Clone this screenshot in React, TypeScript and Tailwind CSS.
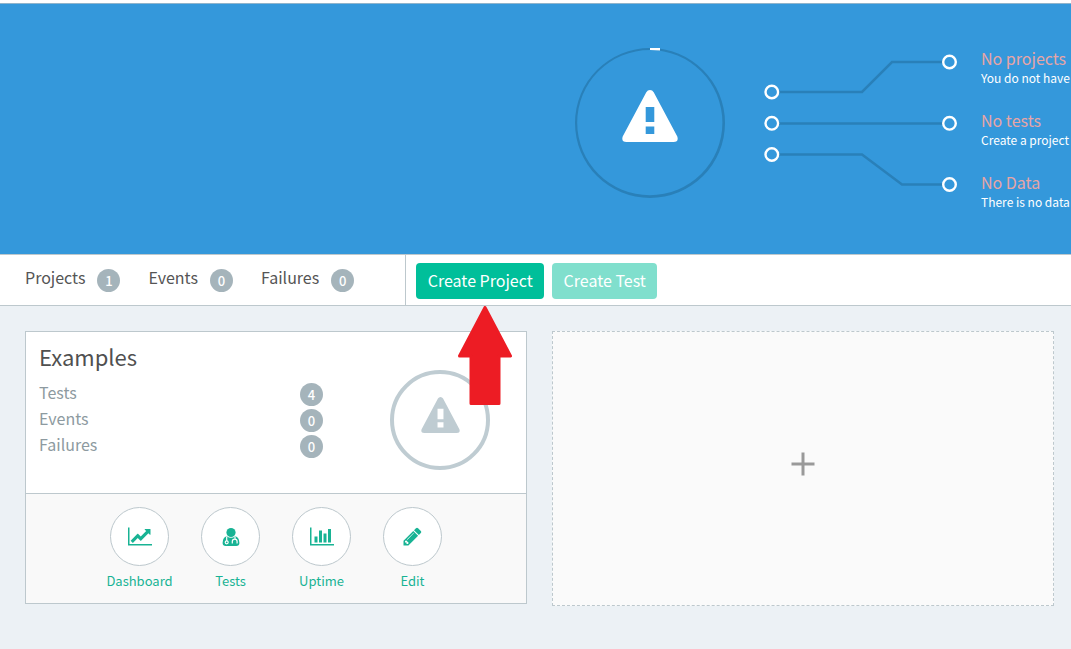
import React from "react";

const notices = [
  { title: "No projects", text: "You do not have" },
  { title: "No tests", text: "Create a project" },
  { title: "No Data", text: "There is no data" },
];

const totals = [
  { label: "Projects", count: 1 },
  { label: "Events", count: 0 },
  { label: "Failures", count: 0 },
];

const exampleStats = [
  { label: "Tests", count: 4 },
  { label: "Events", count: 0 },
  { label: "Failures", count: 0 },
];

const WarningIcon: React.FC<{ className: string }> = ({ className }) => (
  <svg viewBox="0 0 56 52" className={className} fill="currentColor" aria-hidden="true">
    <path
      fillRule="evenodd"
      d="M24.300 2.200Q25.600 0 28 0T31.700 2.200L55.300 46.500Q57 52 51.500 52H4.500Q-1 52 .7 46.500ZM23.700 17V32H32.300V17ZM23.700 36.500V44H32.300V36.500Z"
    />
  </svg>
);

const LineChartIcon = () => (
  <svg viewBox="0 0 2048 1792" className="h-[21px] w-6" fill="currentColor" aria-hidden="true">
    <path d="M2048 1536v128h-2048v-1536h128v1408h1920zm-128-1248v435q0 21-19.500 29.500t-35.500-7.500l-121-121-633 633q-10 10-23 10t-23-10l-233-233-416 416-192-192 585-585q10-10 23-10t23 10l233 233 464-464-121-121q-16-16-7.500-35.500t29.500-19.500h435q14 0 23 9t9 23z" />
  </svg>
);

const BarChartIcon = () => (
  <svg viewBox="0 0 2048 1792" className="h-[21px] w-6" fill="currentColor" aria-hidden="true">
    <path d="M640 896v512h-256v-512h256zm384-512v1024h-256v-1024h256zm1024 1152v128h-2048v-1536h128v1408h1920zm-640-896v768h-256v-768h256zm384-384v1152h-256v-1152h256z" />
  </svg>
);

const PencilIcon = () => (
  <svg viewBox="0 0 1792 1792" className="size-[21px]" fill="currentColor" aria-hidden="true">
    <path d="M491 1536l91-91-235-235-91 91v107h128v128h107zm523-928q0-22-22-22-10 0-17 7l-542 542q-7 7-7 17 0 22 22 22 10 0 17-7l542-542q7-7 7-17zm-54-192l416 416-832 832h-416v-416zm683 96q0 53-37 90l-166 166-416-416 166-165q36-38 90-38 53 0 91 38l235 234q37 39 37 91z" />
  </svg>
);

const DoctorIcon = () => (
  <svg viewBox="0 0 18 20" className="h-5 w-[18px]" aria-hidden="true">
    <path
      fill="currentColor"
      d="M4.800 9.200Q9 12.300 13.200 9.200Q17.400 10.200 17.400 16Q17.400 19 14.200 19H3.800Q.6 19 .6 16Q.6 10.200 4.800 9.200Z"
    />
    <circle cx="9" cy="5.500" r="4.600" fill="currentColor" />
    <path
      d="M4.700 9.500V14M13 9.500V12M10.300 16.500V14.500Q10.300 12.200 12.700 12.200T15.100 14.500V16.500"
      fill="none"
      stroke="white"
      strokeWidth="1.200"
    />
    <circle cx="4.700" cy="15.300" r="1.500" fill="currentColor" stroke="white" strokeWidth="1.200" />
  </svg>
);

const actions = [
  { label: "Dashboard", icon: <LineChartIcon /> },
  { label: "Tests", icon: <DoctorIcon /> },
  { label: "Uptime", icon: <BarChartIcon /> },
  { label: "Edit", icon: <PencilIcon /> },
];

const Badge: React.FC<{ count: number }> = ({ count }) => (
  <span className="flex size-[23px] shrink-0 items-center justify-center rounded-full bg-[#a5b4bb] text-[13px] leading-none font-medium text-white">
    {count}
  </span>
);

const StatusHeader = () => (
  <header className="mt-[3px] flex h-[251px] items-start justify-end overflow-hidden border-t border-[#8fb4cc] bg-[#3498db] pt-[43px]">
    <div className="relative mt-px flex size-[150px] shrink-0 items-center justify-center">
      <svg viewBox="0 0 150 150" className="absolute inset-0" aria-hidden="true">
        <path
          fill="#2980b9"
          fillRule="evenodd"
          d="M75 0A75 75 0 1 1 75 150A75 75 0 1 1 75 0ZM74.800 2A72.600 72.600 0 1 0 74.800 147.200A72.600 72.600 0 1 0 74.800 2Z"
        />
        <path d="M75 0H85V2.600L75 2Z" fill="white" />
      </svg>
      <WarningIcon className="mb-[14px] h-[52px] w-14 text-white" />
    </div>
    <svg viewBox="764 47 194 150" className="ml-[39px] h-[150px] w-[194px] shrink-0" fill="none" aria-hidden="true">
      <g stroke="#2980b9" strokeWidth="2.500">
        <path d="M779 92H862L892 62H943" />
        <path d="M779 123.500H943" />
        <path d="M779 154.500H862L902 184.500H943" />
      </g>
      <g stroke="white" strokeWidth="2.400">
        <circle cx="771.800" cy="92" r="6.300" />
        <circle cx="771.800" cy="123.300" r="6.300" />
        <circle cx="771.800" cy="154.500" r="6.300" />
        <circle cx="949.500" cy="62" r="6.300" />
        <circle cx="949.500" cy="123.300" r="6.300" />
        <circle cx="949.500" cy="184.500" r="6.300" />
      </g>
    </svg>
    <ul className="ml-[23px] flex w-[90px] shrink-0 flex-col gap-[22px] whitespace-nowrap">
      {notices.map((notice) => (
        <li key={notice.title}>
          <h2 className="text-base leading-[22px] text-[#e8a5a5]">{notice.title}</h2>
          <p className="text-xs leading-[18px] text-white">{notice.text}</p>
        </li>
      ))}
    </ul>
  </header>
);

const Toolbar = () => (
  <div className="flex h-[52px] border-y border-[#bdc8cd] bg-white">
    <dl className="flex items-center gap-7 border-r border-[#bdc8cd] pr-[51px] pl-[25px]">
      {totals.map((total) => (
        <div key={total.label} className="flex items-center gap-3">
          <dt className="pb-[6px] text-base leading-6 text-[#555]">{total.label}</dt>
          <dd>
            <Badge count={total.count} />
          </dd>
        </div>
      ))}
    </dl>
    <div className="flex items-end gap-2 pb-[6px] pl-[10px]">
      <div className="relative">
        <button type="button" className="block h-9 w-32 rounded bg-[#00bf9a] pb-0.5 text-base text-white">
          Create Project
        </button>
        {/* pointer to the first step */}
        <svg viewBox="0 0 54 99" className="absolute top-[43px] left-[42px] z-10 h-[99px] w-[54px]" aria-hidden="true">
          <path
            d="M27 1.500L52.500 50H41V97.500H13V50H1.500Z"
            fill="#ed1c24"
            stroke="#ed1c24"
            strokeWidth="3"
            strokeLinejoin="round"
          />
        </svg>
      </div>
      <button type="button" disabled className="block h-9 w-[105px] rounded bg-[#80dfcd] pb-0.5 text-base text-white">
        Create Test
      </button>
    </div>
  </div>
);

const ProjectCard = () => (
  <article className="border border-[#bdc8cd] bg-white">
    <div className="flex h-[162px] items-start justify-between border-b border-[#bdc8cd] pr-9 pl-[13px]">
      <div className="w-[284px] pt-[6px]">
        <h2 className="text-[22px] leading-9 text-[#505050]">Examples</h2>
        <dl className="mt-[7px]">
          {exampleStats.map((stat) => (
            <div key={stat.label} className="flex h-[26px] items-center justify-between">
              <dt className="pb-1 text-base leading-[22px] text-[#8d9aa0]">{stat.label}</dt>
              <dd>
                <Badge count={stat.count} />
              </dd>
            </div>
          ))}
        </dl>
      </div>
      <div className="mt-[38px] flex size-[100px] items-center justify-center rounded-full border-4 border-[#bfccd2]">
        <WarningIcon className="mb-[10px] h-9 w-[39px] text-[#bfccd2]" />
      </div>
    </div>
    <nav className="flex h-[109px] justify-center bg-[#f9f9f9] pt-[13px]">
      {actions.map((action) => (
        <a key={action.label} href="#" className="flex w-[91px] flex-col items-center text-[#18b394]">
          <span className="flex size-[59px] items-center justify-center rounded-full border border-[#bdc8cd] bg-white">
            {action.icon}
          </span>
          <span className="mt-[5px] text-[13px] leading-5">{action.label}</span>
        </a>
      ))}
    </nav>
  </article>
);

export default function App() {
  return (
    <div className="flow-root min-h-screen overflow-x-hidden bg-white font-['Noto_Sans_CJK_SC',sans-serif]">
      <StatusHeader />
      <Toolbar />
      <main className="grid min-h-[343px] grid-cols-2 items-start gap-[25px] bg-[#ecf1f5] pt-[25px] pr-[17px] pb-11 pl-[25px]">
        <ProjectCard />
        <button
          type="button"
          aria-label="Add project"
          className="flex h-[275px] items-center justify-center border border-dashed border-[#bdc8cd] bg-[#fafafa]"
        >
          <svg viewBox="0 0 24 24" className="mb-[10px] size-6 text-[#999]" aria-hidden="true">
            <path d="M12 .5V23.500M.5 12H23.500" stroke="currentColor" strokeWidth="3" />
          </svg>
        </button>
      </main>
    </div>
  );
}
